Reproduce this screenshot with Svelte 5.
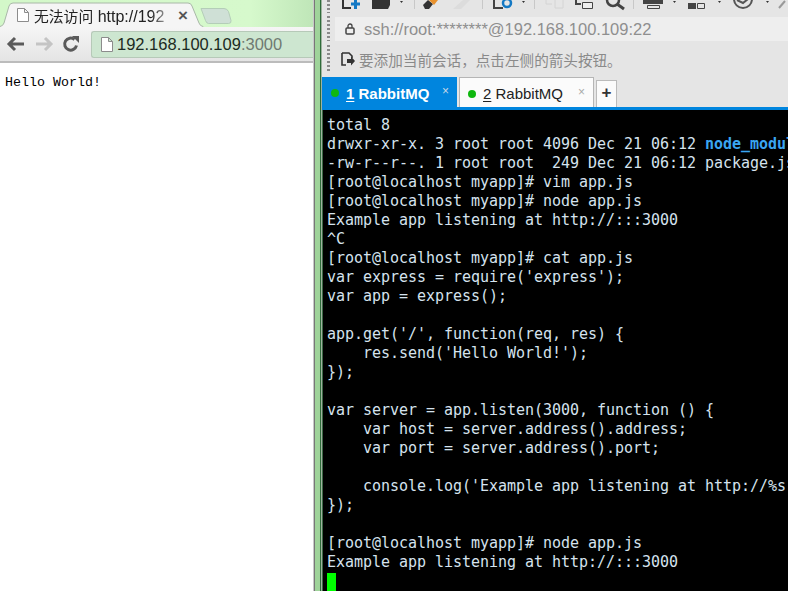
<script>
  const lines = [
    [{ t: 'total 8' }],
    [{ t: 'drwxr-xr-x. 3 root root 4096 Dec 21 06:12 ' }, { t: 'node_modul', c: 'dir' }],
    [{ t: '-rw-r--r--. 1 root root  249 Dec 21 06:12 package.js' }],
    [{ t: '[root@localhost myapp]# vim app.js' }],
    [{ t: '[root@localhost myapp]# node app.js' }],
    [{ t: 'Example app listening at http://:::3000' }],
    [{ t: '^C' }],
    [{ t: '[root@localhost myapp]# cat app.js' }],
    [{ t: "var express = require('express');" }],
    [{ t: 'var app = express();' }],
    [{ t: '' }],
    [{ t: "app.get('/', function(req, res) {" }],
    [{ t: "    res.send('Hello World!');" }],
    [{ t: '});' }],
    [{ t: '' }],
    [{ t: 'var server = app.listen(3000, function () {' }],
    [{ t: '    var host = server.address().address;' }],
    [{ t: '    var port = server.address().port;' }],
    [{ t: '' }],
    [{ t: "    console.log('Example app listening at http://%s" }],
    [{ t: '});' }],
    [{ t: '' }],
    [{ t: '[root@localhost myapp]# node app.js' }],
    [{ t: 'Example app listening at http://:::3000' }]
  ];
</script>

<div class="screen">
  <section class="browser">
    <div class="tabstrip">
      <svg class="tabshape" width="240" height="27" viewBox="0 0 240 27">
        <path d="M201 8.500h23q3 0 4.500 3l2.500 9q.5 3-2.500 3h-20q-2 0-3-3z" fill="#cfe0d6" stroke="#b4cdb8" />
        <path d="M0 26.500q3-.5 4-3.500l5-17q1-3 4-3h175q3 0 4 3l7 17q1 3 4 3.500V28H0z" fill="#f5f5f5" stroke="#a9b8a8" />
      </svg>
      <svg class="fav" width="12" height="14" viewBox="0 0 12 14"><path d="M.5.500h7l4 4v9H.5z M7.500.5v4h4" fill="#fff" stroke="#8c8c8c" /></svg>
      <span class="tabtitle"><span class="zh">无法访问</span> http://192</span>
      <span class="tabx">×</span>
    </div>
    <div class="toolbar">
      <svg width="20" height="16" viewBox="0 0 20 16"><path d="M18 8H4M9 2 3 8l6 6" fill="none" stroke="#5a5a5a" stroke-width="3" /></svg>
      <svg width="20" height="16" viewBox="0 0 20 16"><path d="M2 8h14M11 2l6 6-6 6" fill="none" stroke="#c4c4c4" stroke-width="3" /></svg>
      <svg width="18" height="18" viewBox="0 0 18 18"><path d="M14.500 10.500A6 6 0 1 1 12.500 4.500" fill="none" stroke="#5a5a5a" stroke-width="3" /><path d="M10 1h7v7z" fill="#5a5a5a" /></svg>
      <div class="omnibox">
        <svg width="12" height="15" viewBox="0 0 12 15"><path d="M.5.500h7l4 4v10H.5z M7.500.5v4h4" fill="#fff" stroke="#8c8c8c" /></svg>
        <span class="host">192.168.100.109</span><span class="port">:3000</span>
      </div>
    </div>
    <div class="page">Hello World!</div>
  </section>

  <div class="edge"></div>

  <section class="xshell">
    <div class="tools">
      <span class="grip"></span>
      <svg width="453" height="15" viewBox="335 0 453 15">
        <path d="M343 0v8h8" fill="none" stroke="#333" stroke-width="2" />
        <path d="M351 4h9M355.500 0v9" stroke="#1479c4" stroke-width="3" />
        <path d="M372 0h18v5l-2 4h-16z" fill="#333" />
        <path d="M400 1h3l-1.500 2z" fill="#333" />
        <path d="M414.500 0v9M482.500 0v9M534.500 0v9M633.500 0v9" stroke="#c8c8c8" />
        <path d="M423 5l5-5 5 4-4 5h-4z" fill="#333" /><path d="M429 0h9l-4 5z" fill="#e8912d" />
        <path d="M453 9l10-9h7l-9 9z" fill="#dcdcdc" />
        <path d="M494 0v8h9" fill="none" stroke="#444" stroke-width="2" />
        <circle cx="507" cy="3" r="4" fill="none" stroke="#1479c4" stroke-width="2.500" />
        <path d="M522 1h3l-1.500 2z" fill="#333" />
        <path d="M546 0v4h6M555 0v8h8V0" fill="none" stroke="#d4d4d4" />
        <path d="M576 0v4h5" fill="none" stroke="#444" stroke-width="2" /><path d="M582.500 2.500h10v6h-10z" fill="#eee" stroke="#444" />
        <circle cx="613" cy="0" r="6" fill="none" stroke="#444" stroke-width="2.500" /><path d="M617 4l7 5" stroke="#444" stroke-width="3" />
        <path d="M643 0h20v4h-20z" fill="#444" /><path d="M647.500 5.500h12v3h-12z" fill="none" stroke="#444" />
        <path d="M673 1h3l-1.500 2z" fill="#333" />
        <path d="M688 3h8v6h-8z" fill="#444" /><path d="M697.500 3.500h7v5h-7z" fill="none" stroke="#444" />
        <path d="M718 1h3l-1.500 2z" fill="#333" />
        <circle cx="743" cy="-1" r="9" fill="none" stroke="#555" stroke-width="2" /><path d="M737 0l6 3 5-4" fill="none" stroke="#555" stroke-width="2" />
        <path d="M766 1h3l-1.500 2z" fill="#333" />
        <path d="M779 8l6-7" stroke="#999" stroke-width="2" />
      </svg>
    </div>
    <div class="address">
      <span class="grip tall"></span>
      <div class="addrfield">
        <svg width="10" height="12" viewBox="0 0 10 12"><rect x="1" y="5" width="8" height="6" rx="1" fill="none" stroke="#444" stroke-width="1.500" /><path d="M3 5V3a2 2 0 0 1 4 0v2" fill="none" stroke="#444" stroke-width="1.300" /></svg>
        <span>ssh://root:********@192.168.100.109:22</span>
      </div>
    </div>
    <div class="hint">
      <span class="grip tall2"></span>
      <svg width="14" height="14" viewBox="0 0 14 14"><path d="M1 1h7l3 3v2M1 1v12h4" fill="none" stroke="#333" stroke-width="1.600" /><path d="M6 7h4V4.500L14 9l-4 4.500V11H6z" fill="#333" /></svg>
      <span>要添加当前会话，点击左侧的箭头按钮。</span>
    </div>
    <div class="tabs">
      <div class="xtab active">
        <i class="dot"></i><span class="label"><u>1</u> RabbitMQ</span><span class="close">×</span>
      </div>
      <div class="xtab idle">
        <i class="dot"></i><span class="label"><u>2</u> RabbitMQ</span><span class="close">×</span>
      </div>
      <div class="plus">+</div>
    </div>
    <div class="terminal">
      {#each lines as line}
        <div class="line">{#each line as part}<span class={part.c}>{part.t}</span>{/each}</div>
      {/each}
      <div class="caret"></div>
    </div>
  </section>
</div>

<style>
  :global(body) { margin: 0; overflow: hidden; }
  .screen { display: flex; width: 788px; height: 591px; overflow: hidden; background: #fff; font-family: "Liberation Sans", "Noto Sans CJK SC", sans-serif; }

  .browser { width: 313px; flex: none; display: flex; flex-direction: column; overflow: hidden; }
  .tabstrip { position: relative; height: 27px; flex: none; display: flex; align-items: center; padding: 3px 0 0 17px; box-sizing: border-box; background: linear-gradient(90deg, #d3f8c9 0%, #d6f9cc 80%, #bfe6b8 100%); }
  .tabshape { position: absolute; left: 0; top: 0; }
  .fav { position: relative; margin-right: 5px; }
  .tabtitle { position: relative; width: 137px; overflow: hidden; white-space: nowrap; font-size: 16px; color: #222; -webkit-mask-image: linear-gradient(90deg, #000 85%, transparent 105%); mask-image: linear-gradient(90deg, #000 85%, transparent 105%); }
  .zh { font-size: 14.800px; }
  .tabx { position: relative; margin-left: 7px; font-size: 17px; font-weight: bold; color: #555; line-height: 1; }
  .toolbar { height: 36px; flex: none; display: flex; align-items: center; gap: 8px; padding-left: 6px; box-sizing: border-box; background: linear-gradient(#f5f5f5, #e4e4e4); border-bottom: 2px solid #bcbcbc; }
  .omnibox { flex: 1; height: 27px; margin-left: 3px; display: flex; align-items: center; padding-left: 9px; box-sizing: border-box; background: #cde6d0; border: 1px solid #b6c9b8; border-right: 0; border-radius: 3px 0 0 3px; font-size: 16.500px; }
  .omnibox svg { margin-right: 4px; }
  .host { color: #1c2b22; }
  .port { color: #707a72; }
  .page { flex: 1; padding-top: 10px; padding-left: 5px; background: #fff; font-family: "Liberation Mono", monospace; font-size: 13.330px; line-height: 19px; color: #000; }

  .edge { width: 9px; flex: none; background: linear-gradient(90deg, #c8c8c8 0 1px, #777 1px 2px, #9fd39a 2px 7px, #2f6b3a 7px 8px, #9fb39f 8px 9px); }

  .xshell { flex: 1; min-width: 0; display: flex; flex-direction: column; background: #e5e5e5; }
  .tools { height: 16px; flex: none; display: flex; align-items: flex-start; overflow: hidden; }
  .grip { width: 3px; flex: none; margin: 0 5px 0 5px; height: 13px; background: repeating-linear-gradient(#8a8a8a 0 2px, transparent 2px 4px); }
  .address { height: 25px; flex: none; display: flex; align-items: center; }
  .grip.tall { height: 25px; }
  .addrfield { flex: 1; height: 24px; display: flex; align-items: center; gap: 9px; padding: 1px 0 0 10px; box-sizing: border-box; background: #eeeeee; font-size: 16.500px; color: #8f8f8f; white-space: nowrap; }
  .hint { height: 36px; flex: none; display: flex; align-items: center; gap: 4px; font-size: 14.600px; color: #8a8a8a; white-space: nowrap; }
  .grip.tall2 { height: 28px; margin-right: 7px; }
  .tabs { height: 33px; flex: none; display: flex; align-items: flex-end; box-sizing: border-box; border-bottom: 3px solid #0085de; }
  .xtab { width: 135px; height: 30px; flex: none; display: flex; align-items: center; box-sizing: border-box; padding: 2px 0 0 9px; position: relative; font-size: 15px; }
  .active { background: #0085de; color: #fff; font-weight: bold; margin-right: 2px; }
  .idle { background: #fbfbfb; color: #222; border: 1px solid #b5b5b5; border-bottom: 0; margin-right: 2px; padding-left: 8px; }
  .dot { width: 8px; height: 8px; border-radius: 50%; background: #0fb80f; margin-right: 7px; flex: none; }
  .label u { text-underline-offset: 2px; }
  .close { position: absolute; right: 8px; top: 7px; font-size: 12px; font-weight: normal; color: #c7d8e6; }
  .idle .close { color: #aaa; }
  .plus { width: 21px; height: 27px; box-sizing: border-box; background: #fbfbfb; border: 1px solid #bbb; border-bottom: 0; text-align: center; font-size: 17px; font-weight: bold; line-height: 24px; color: #333; }

  .terminal { flex: 1; min-height: 0; background: #000; border-left: 1px solid #3f6b48; padding: 6px 0 0 4px; font-family: "DejaVu Sans Mono", monospace; font-size: 15px; letter-spacing: -0.030px; line-height: 19px; color: #d5e3ee; overflow: hidden; }
  .line { height: 19px; white-space: pre; }
  .dir { color: #3aa6f2; font-weight: bold; }
  .caret { width: 9px; height: 18px; margin-top: 1px; background: #00ff00; }
</style>
